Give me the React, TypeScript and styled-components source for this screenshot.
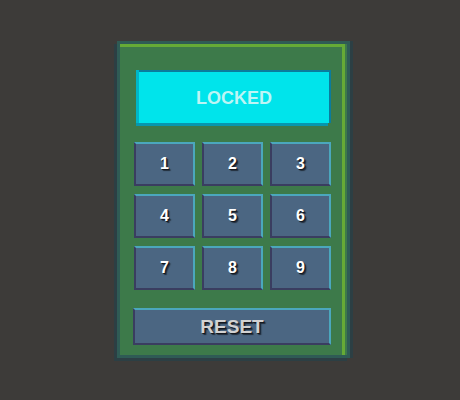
import * as React from 'react';
import styled, { createGlobalStyle } from 'styled-components';

const GlobalStyle = createGlobalStyle`
    html, body {
        margin: 0;
        padding: 0;
        background: #3d3b39;
    }
    body {
        font-family: "Liberation Sans", Arial, sans-serif;
    }
`;

const Page = styled.div`
    width: 460px;
    height: 400px;
    box-sizing: border-box;
    padding: 41px 0 0 117px;
`;

const Panel = styled.div`
    box-sizing: border-box;
    width: 233px;
    height: 317px;
    padding: 26px 16px 10px 14px;
    background: #3d7a4a;
    border: 3px solid #2f5b55;
    box-shadow:
        inset -2px 0 0 #3d7a4a,
        inset -5px 3px 0 #66aa36,
        -3px 3px 0 #2c3f44,
        3px 0 0 #2c3f44;
    display: flex;
    flex-direction: column;
`;

const Display = styled.div`
    box-sizing: border-box;
    height: 53px;
    margin: 0 0 19px 5px;
    background: #00e4eb;
    border-top: 2px solid #0b7c9c;
    border-right: 2px solid #0b7c9c;
    box-shadow:
        -3px 0 0 #00b6c8,
        -3px 3px 0 #0896ad;
    display: flex;
    align-items: center;
    justify-content: center;
    padding-top: 1px;
    color: #bdf5f5;
    font-size: 18px;
    font-weight: 700;
`;

const Keypad = styled.div`
    display: grid;
    grid-template-columns: repeat(3, 61px);
    grid-auto-rows: 44px;
    column-gap: 7px;
    row-gap: 8px;
`;

const Key = styled.button<{ $wide?: boolean }>`
    box-sizing: border-box;
    margin: 0;
    padding: 0;
    background: #4b6682;
    border-style: solid;
    border-width: 2px;
    border-color: #4ba7bd #4ba7bd #3a3d60 #3a3d60;
    font-family: "Liberation Sans", Arial, sans-serif;
    font-weight: 700;
    font-size: ${p => (p.$wide ? '19px' : '16px')};
    color: ${p => (p.$wide ? '#d2d2d2' : '#ffffff')};
    text-shadow: 1px 1px 0 #15181f, 2px 2px 1px rgba(0, 0, 0, 0.55);
    cursor: pointer;
    display: flex;
    align-items: center;
    justify-content: center;
`;

const ResetKey = styled(Key)`
    height: 37px;
    margin: 18px 0 0 -1px;
    width: 198px;
`;

const digits = ['1', '2', '3', '4', '5', '6', '7', '8', '9'];

const App = () => {
    const [code, setCode] = React.useState('');

    return (
        <Page>
            <GlobalStyle />
            <Panel>
                <Display>{code.length > 0 ? code.replace(/./g, '*') : 'LOCKED'}</Display>
                <Keypad>
                    {digits.map(d => (
                        <Key key={d} onClick={() => setCode(c => (c + d).slice(-4))}>
                            {d}
                        </Key>
                    ))}
                </Keypad>
                <ResetKey $wide onClick={() => setCode('')}>
                    RESET
                </ResetKey>
            </Panel>
        </Page>
    );
};

export default App;
